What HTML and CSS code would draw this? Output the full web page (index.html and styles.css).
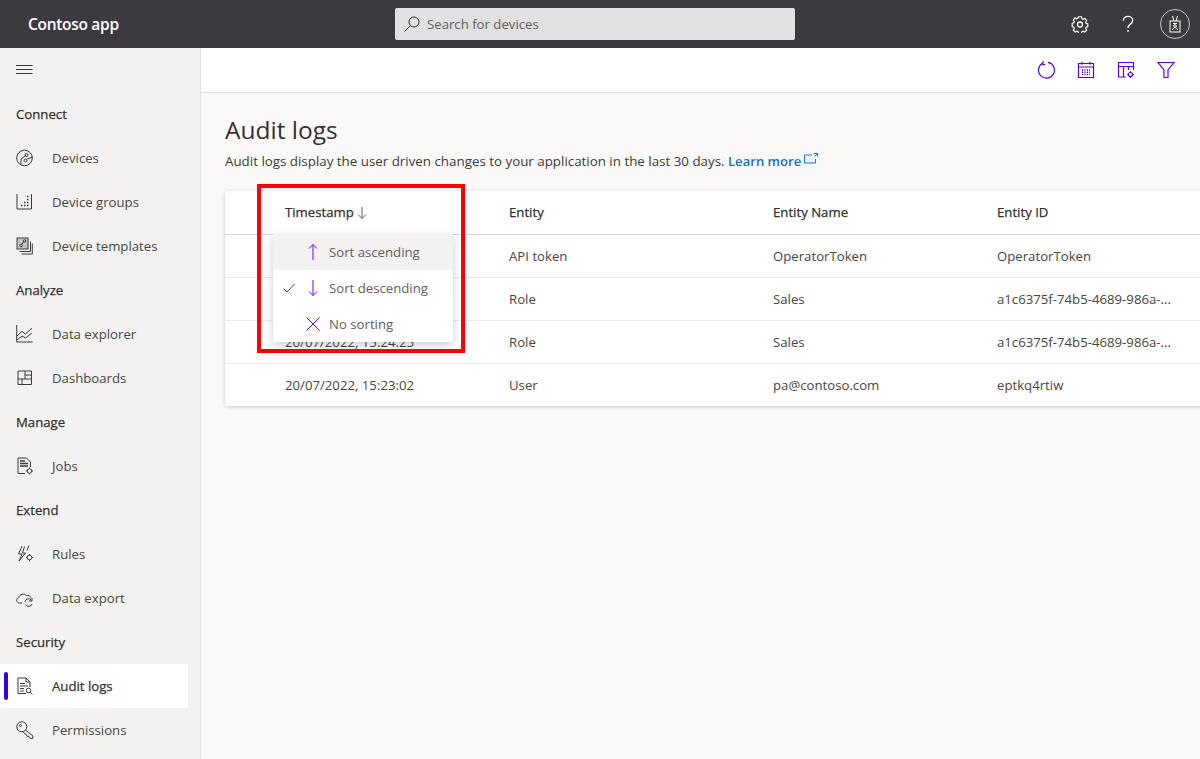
FILE: index.html
```html
<!DOCTYPE html>
<html lang="en">
<head>
<meta charset="UTF-8">
<meta name="viewport" content="width=device-width, initial-scale=1.0">
<title>Audit logs - Contoso app</title>
<link rel="stylesheet" href="styles.css">
</head>
<body>

<header class="topbar">
    <div class="brand">Contoso app</div>
    <div class="search">
        <svg class="search-icon" viewBox="0 0 18 18" width="18" height="18"><circle cx="11" cy="7" r="5" /><path d="M7.4 10.6 1.5 16.5" /></svg>
        <span>Search for devices</span>
    </div>
    <div class="topbar-actions">
        <svg class="top-icon gear" viewBox="0 0 18 18" width="18" height="18"><path d="M7.300 1.500h3.400l.4 2.100 1.400.7 1.900-1 2.100 2.400-1.200 1.700.5 1.500 1.900.6v2.900l-1.900.6-.5 1.500 1.200 1.700-2.100 2.300-1.900-1-1.400.6-.4 2.100H7.300l-.4-2.100-1.400-.6-1.900 1-2.100-2.300 1.200-1.700-.5-1.500-1.900-.6V8.900l1.900-.6.500-1.500-1.200-1.700 2.100-2.400 1.900 1 1.400-.7z" transform="translate(.9 .4) scale(.9)" /><circle cx="9" cy="9.500" r="2.500" /></svg>
        <svg class="top-icon help" viewBox="0 0 18 18" width="18" height="18"><path d="M4.300 5.700C4.300 3 6.400 1.300 9 1.300s4.700 1.700 4.700 4.200c0 3.800-4.700 3.500-4.700 7.500" /><path d="M9 15v2" /></svg>
        <div class="avatar">
            <svg class="top-icon" viewBox="0 0 18 18" width="18" height="18"><rect x="4" y="6" width="10" height="11" /><path d="M6.500 1 8 6M11.500 1 10 6M7 8.500h4" /><circle cx="9" cy="11" r="1.300" /><path d="M6.500 15c.3-1.600 1.200-2.300 2.500-2.300s2.200.7 2.500 2.300" /></svg>
        </div>
    </div>
</header>

<div class="layout">
    <nav class="sidebar">
        <div class="nav-row menu-row">
            <svg class="nav-icon" viewBox="0 0 18 18" width="18" height="18"><path d="M0 4.500h16.500M0 8.500h16.500M0 12.500h16.500" /></svg>
        </div>

        <div class="nav-row nav-section">Connect</div>
        <a class="nav-row">
            <svg class="nav-icon" viewBox="0 0 18 18" width="18" height="18"><circle cx="8.500" cy="9" r="7.800" /><circle cx="10.500" cy="6" r="1.500" /><circle cx="9.500" cy="11.500" r="1.500" /><path d="M9.300 7 5 10v5.500M11 10l6-2" /></svg>
            Devices
        </a>
        <a class="nav-row">
            <svg class="nav-icon" viewBox="0 0 18 18" width="18" height="18"><path d="M1 1v15h14.500V1" /><path class="dots" d="M5 12.500h1.500M8 12.500h1.500M11 12.500h1.500M8 9.500h1.500M11 9.500h1.500M11 6.500h1.500M11 3.500h1.500" /></svg>
            Device groups
        </a>
        <a class="nav-row">
            <svg class="nav-icon" viewBox="0 0 18 18" width="18" height="18"><rect class="fill-grey" x="1" y="1" width="11" height="11" /><path d="M3.500 14.500h11v-10M5.500 17h10.800V6.500" /><circle cx="8.500" cy="4" r="1.300" /><circle cx="5" cy="8.500" r="1.300" /><path d="m7.500 5-2 2.500" /></svg>
            Device templates
        </a>

        <div class="nav-row nav-section">Analyze</div>
        <a class="nav-row">
            <svg class="nav-icon" viewBox="0 0 18 18" width="18" height="18"><path d="M.7 0v17h16" /><path d="m1 11 5-4.500 3.500 2.500L16 3M1 15l5-4 3.500 2L16 8" /></svg>
            Data explorer
        </a>
        <a class="nav-row">
            <svg class="nav-icon" viewBox="0 0 18 18" width="18" height="18"><path d="M2 2h13.500v13.500H2zM2 10h13.500M9 2v8M6 10v5.500M9 6h6.500" /></svg>
            Dashboards
        </a>

        <div class="nav-row nav-section">Manage</div>
        <a class="nav-row">
            <svg class="nav-icon" viewBox="0 0 18 18" width="18" height="18"><path d="M9 16.500H2V1h8.500L14.500 5v5" /><path class="dots" d="M4 4h5M4 6.500h8M4 9h8" /><circle cx="13.500" cy="14" r="2.300" /><path d="M13.500 10.500v1M13.500 16.500v1M10 14h1M16 14h1" /></svg>
            Jobs
        </a>

        <div class="nav-row nav-section">Extend</div>
        <a class="nav-row">
            <svg class="nav-icon" viewBox="0 0 18 18" width="18" height="18"><path d="M6 1 2.500 9h3.700L3 16l6.500-8H6.500l2-6.500M13 .5l-2 5" /><circle cx="13.500" cy="12.500" r="2.300" /><path d="M13.500 9v1M13.500 15v1.500M10 12.500h1M16 12.500h1.200" /></svg>
            Rules
        </a>
        <a class="nav-row">
            <svg class="nav-icon" viewBox="0 0 18 18" width="18" height="18"><path d="M6 14H3.500C.2 14-.5 9.500 2.800 8.700 3.200 5 8.500 3.800 10.500 6.800c1.800-.8 4 0 4.500 2" /><path d="M9 13a3.500 3.500 0 0 1 6-2.200l1 1M9.500 15.500a3.500 3.500 0 0 0 6.500-.5M16 9v3h-3" /></svg>
            Data export
        </a>

        <div class="nav-row nav-section">Security</div>
        <a class="nav-row active">
            <svg class="nav-icon" viewBox="0 0 18 18" width="18" height="18"><path d="M10 16.500H2V1h8l4 4v5" /><path d="M10 1v4h4M4 6.500h5M4 9h8M4 11.500h4M4 14h4" /><circle cx="12.500" cy="13.500" r="2.300" /><path d="m14.200 15.200 2.300 2.300" /></svg>
            Audit logs
        </a>
        <a class="nav-row">
            <svg class="nav-icon" viewBox="0 0 18 18" width="18" height="18"><circle cx="5.800" cy="5.800" r="5" /><path d="m9.500 9 7.300 5.800v2.500h-3l-1-1.800-1.700-.2-.4-1.800-1.700-.4L7 10.500" /><circle cx="4.500" cy="4.500" r="1" /></svg>
            Permissions
        </a>
    </nav>

    <main class="content">
        <div class="toolbar">
            <svg class="tool-icon" viewBox="0 0 18 18" width="18" height="18"><path d="M5.500 2.200A8 8 0 1 0 11 1.300" /><path d="M6.500 .2 5.200 3l3 .9" /></svg>
            <svg class="tool-icon" viewBox="0 0 18 18" width="18" height="18"><path d="M1.500 2.500h15v14h-15zM1.500 6h15M5 .8v3M13 .8v3" /><path class="dots" d="M5 9h8M5 11.200h8M5 13.400h8" stroke-dasharray="1.200 1.200" /></svg>
            <svg class="tool-icon" viewBox="0 0 18 18" width="18" height="18"><path d="M9 16H1.500V1.500h15V9M1.500 5.500h15M6.500 5.500V16M11.500 5.500V9" /><circle cx="13.500" cy="13.500" r="2" /><path d="M13.500 10.200v1.200M13.500 15.700v1.200M10.200 13.500h1.200M15.700 13.500h1.200" /></svg>
            <svg class="tool-icon" viewBox="0 0 18 18" width="18" height="18"><path d="M1 1.500h16L11 9v7.500H7V9z" /></svg>
        </div>

        <div class="page">
            <h1>Audit logs</h1>
            <p class="lead">Audit logs display the user driven changes to your application in the last 30 days. <a class="learn">Learn more</a>
                <svg class="ext-icon" viewBox="0 0 14 11" width="14" height="11"><path d="M8 2H.5v8h11V6M9.500 .5h4v3M13.500 .5l-3 3" /></svg>
            </p>

            <div class="card">
                <table class="grid">
                    <thead>
                        <tr>
                            <th>Timestamp
                                <svg class="sort-arrow" viewBox="0 0 10 14" width="10" height="14"><path d="M5 1v11.500M1 8.500l4 4 4-4" /></svg>
                            </th>
                            <th>Entity</th>
                            <th>Entity Name</th>
                            <th>Entity ID</th>
                        </tr>
                    </thead>
                    <tbody>
                        <tr><td></td><td>API token</td><td>OperatorToken</td><td>OperatorToken</td></tr>
                        <tr><td></td><td>Role</td><td>Sales</td><td>a1c6375f-74b5-4689-986a-...</td></tr>
                        <tr><td>20/07/2022, 15:24:25</td><td>Role</td><td>Sales</td><td>a1c6375f-74b5-4689-986a-...</td></tr>
                        <tr><td>20/07/2022, 15:23:02</td><td>User</td><td>pa@contoso.com</td><td>eptkq4rtiw</td></tr>
                    </tbody>
                </table>

                <ul class="sort-menu">
                    <li class="hovered">
                        <span class="check"></span>
                        <svg class="menu-icon" viewBox="0 0 16 18" width="16" height="18"><path d="M8 17V1.500M4 5.500l4-4 4 4" /></svg>
                        Sort ascending
                    </li>
                    <li>
                        <svg class="check" viewBox="0 0 12 10" width="12" height="10"><path d="m.5 5.500 3.500 3.500 7.500-8" /></svg>
                        <svg class="menu-icon" viewBox="0 0 16 18" width="16" height="18"><path d="M8 1v15.500M4 12.500l4 4 4-4" /></svg>
                        Sort descending
                    </li>
                    <li>
                        <span class="check"></span>
                        <svg class="menu-icon" viewBox="0 0 16 18" width="16" height="18"><path d="m1.500 2.500 13 13M14.500 2.500l-13 13" /></svg>
                        No sorting
                    </li>
                </ul>

                <div class="highlight"></div>
            </div>
        </div>
    </main>
</div>

</body>
</html>
```

FILE: styles.css
```css
html, body {
    height: 100%;
}
body {
    margin: 0;
    overflow: hidden;
    font-family: "Open Sans", "Noto Sans", sans-serif;
    font-size: 13.2px;
    color: #323130;
    display: flex;
    flex-direction: column;
}
svg {
    fill: none;
    stroke: currentColor;
    stroke-width: 1;
    flex: none;
}

/* top bar */
.topbar {
    height: 48px;
    flex: none;
    background-color: #3b3a3f;
    color: #fff;
    display: flex;
    align-items: center;
}
.brand {
    margin-left: 28px;
    width: 367px;
    font-size: 15.5px;
    font-weight: 600;
    letter-spacing: -0.3px;
}
.search {
    width: 400px;
    height: 32px;
    background-color: #e1e1e1;
    border-radius: 2px;
    display: flex;
    align-items: center;
    gap: 6px;
    padding-left: 8px;
    box-sizing: border-box;
    color: #605e5c;
}
.search-icon {
    color: #323130;
}
.topbar-actions {
    margin-left: auto;
    display: flex;
    align-items: center;
    gap: 30px;
    padding-right: 10px;
}
.gear {
    stroke-width: 1.300;
}
.help {
    stroke-width: 1.300;
    margin-right: -7px;
}
.avatar {
    width: 30px;
    height: 30px;
    border: 1px solid #c8c6c4;
    border-radius: 50%;
    box-sizing: border-box;
    display: flex;
    align-items: center;
    justify-content: center;
}

/* left nav */
.layout {
    flex: 1;
    display: flex;
    min-height: 0;
}
.sidebar {
    width: 200px;
    flex: none;
    background-color: #f3f2f1;
    border-right: 1px solid #e1dfdd;
}
.nav-row {
    height: 44px;
    display: flex;
    align-items: center;
    padding-left: 16px;
    margin-right: 12px;
    gap: 18px;
    color: #484644;
}
.nav-section {
    color: #323130;
    -webkit-text-stroke: 0.25px #323130;
}
.nav-icon {
    color: #3b3a39;
}
.dots {
    stroke-width: 1.500;
}
.fill-grey {
    fill: #c8c6c4;
}
.active {
    background-color: #fff;
    color: #323130;
    -webkit-text-stroke: 0.25px #323130;
    position: relative;
}
.active::before {
    content: "";
    position: absolute;
    left: 4px;
    top: 8px;
    bottom: 8px;
    width: 4px;
    border-radius: 2px;
    background-color: #3a00d6;
}

/* main area */
.content {
    flex: 1;
    min-width: 0;
    background-color: #faf9f8;
    overflow: hidden;
}
.toolbar {
    height: 45px;
    background-color: #fff;
    border-bottom: 1px solid #e1dfdd;
    box-sizing: border-box;
    display: flex;
    align-items: center;
    justify-content: flex-end;
    gap: 22px;
    padding-right: 25px;
}
.tool-icon {
    color: #5a00e0;
    stroke-width: 1.200;
}
.page {
    padding: 22px 0 0 24px;
}
h1 {
    margin: 0;
    font-size: 24.500px;
    font-weight: 400;
    line-height: 30px;
}
.lead {
    margin: 6px 0 20px;
    line-height: 20px;
    font-size: 13.350px;
    color: #3b3a39;
}
.learn {
    color: #1a6fb8;
    font-weight: 600;
    font-size: 13.100px;
}
.ext-icon {
    color: #1a78c9;
    vertical-align: 2px;
    margin-left: -1px;
}

/* audit table */
.card {
    width: 1100px;
    background-color: #fff;
    border-radius: 2px;
    box-shadow: 0 1px 4px rgba(0, 0, 0, 0.2);
    position: relative;
}
.grid {
    width: 100%;
    table-layout: fixed;
    border-collapse: collapse;
}
.grid th:nth-child(1), .grid td:nth-child(1) {
    width: 224px;
    padding-left: 60px;
}
.grid th:nth-child(2), .grid td:nth-child(2) {
    width: 264px;
}
.grid th:nth-child(3), .grid td:nth-child(3) {
    width: 224px;
}
.grid th {
    height: 41px;
    text-align: left;
    font-weight: 400;
    -webkit-text-stroke: 0.25px #323130;
    border-bottom: 1px solid #d8d8d8;
    padding: 0 0 2px;
}
.grid td {
    height: 42px;
    padding: 0;
    color: #484644;
    white-space: nowrap;
    border-bottom: 1px solid #edebe9;
}
.grid tr:last-child td {
    border-bottom: none;
}
.sort-arrow {
    color: #605e5c;
    vertical-align: -3px;
}

/* sort dropdown */
.sort-menu {
    position: absolute;
    left: 48px;
    top: 43px;
    width: 180px;
    margin: 0;
    padding: 0;
    list-style: none;
    background-color: #fff;
    border-radius: 2px;
    box-shadow: 0 3px 10px rgba(0, 0, 0, 0.2);
    color: #605e5c;
}
.sort-menu li {
    height: 36px;
    display: flex;
    align-items: center;
    padding-left: 10px;
    box-sizing: border-box;
}
.sort-menu .hovered {
    background-color: #f3f2f1;
}
.check {
    width: 12px;
    height: 10px;
    color: #484644;
}
.menu-icon {
    margin: 0 8px 0 10px;
    color: #6a00ff;
}

/* red callout box */
.highlight {
    position: absolute;
    left: 32px;
    top: -7px;
    width: 208px;
    height: 169px;
    box-sizing: border-box;
    border: 4px solid #ff0000;
}
```
